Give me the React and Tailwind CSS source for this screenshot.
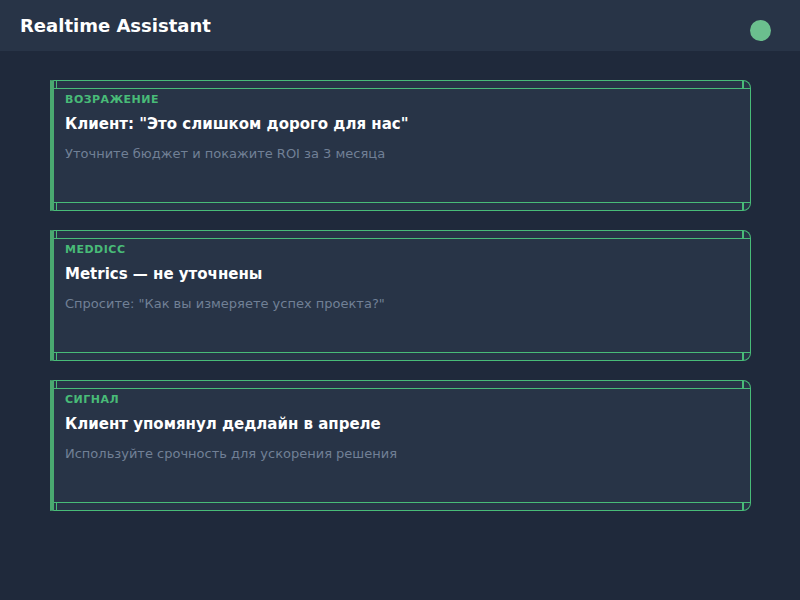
const cards = [
  {
    tag: 'Возражение',
    title: 'Клиент: "Это слишком дорого для нас"',
    hint: 'Уточните бюджет и покажите ROI за 3 месяца',
  },
  {
    tag: 'MEDDICC',
    title: 'Metrics — не уточнены',
    hint: 'Спросите: "Как вы измеряете успех проекта?"',
  },
  {
    tag: 'Сигнал',
    title: 'Клиент упомянул дедлайн в апреле',
    hint: 'Используйте срочность для ускорения решения',
  },
];

const Strip = ({ bottom }) => (
  <div
    className={`flex h-[8px] ${bottom ? 'border-t' : 'border-b'} border-[#48bb78]`}
  >
    <div className="ml-[2px] w-px bg-[#48bb78]" />
    <div className="ml-auto mr-[6px] w-[2px] bg-[#48bb78]" />
  </div>
);

const Card = ({ tag, title, hint }) => (
  <div className="flex flex-col border border-l-4 border-[#48bb78] border-l-[#4aa870] rounded-r-lg bg-[#283447]">
    <Strip />
    <div className="h-[113px] pl-[11px] pt-[3px]">
      <div className="text-[11px] leading-4 font-bold uppercase tracking-[0.5px] text-[#48bb78]">
        {tag}
      </div>
      <div className="mt-[6px] text-[15px] leading-5 font-bold text-white">{title}</div>
      <div className="mt-[10px] text-[13px] leading-5 text-[#718096]">{hint}</div>
    </div>
    <Strip bottom />
  </div>
);

export default function App() {
  return (
    <div
      className="w-[800px] h-[600px] bg-[#1f293b] flex flex-col"
      style={{ fontFamily: '"DejaVu Sans", sans-serif' }}
    >
      {/* Header */}
      <header className="h-[51px] bg-[#283447] flex items-center justify-between px-5">
        <h1 className="text-[18px] leading-6 font-bold text-white">Realtime Assistant</h1>
        <div className="w-[21px] h-[21px] rounded-full bg-[#6bbf8e] mt-[10px] mr-[9px]" />
      </header>

      {/* Cards */}
      <main className="flex flex-col gap-[19px] pt-[29px] pl-[50px] pr-[49px]">
        {cards.map((c) => (
          <Card key={c.tag} {...c} />
        ))}
      </main>
    </div>
  );
}
